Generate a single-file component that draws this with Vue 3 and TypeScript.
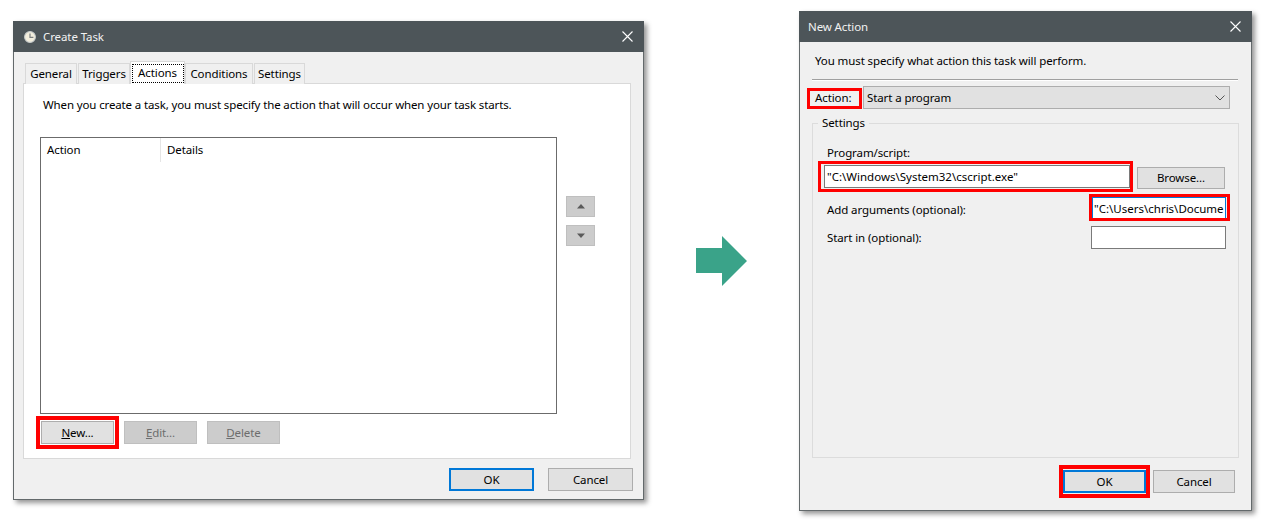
<script setup lang="ts">
const tabs: string[] = ['General', 'Triggers', 'Actions', 'Conditions', 'Settings']
</script>

<template>
  <div class="page">
    <section class="win win-left">
      <header class="title">
        <svg class="clock" width="12" height="12" viewBox="0 0 12 12">
          <circle cx="6" cy="6" r="5.4" fill="#f3eedd" stroke="#c8cccc" stroke-width="1.1" />
          <path d="M6 2.6V6.4H9.4" fill="none" stroke="#7b7f80" stroke-width="1.2" />
        </svg>
        <span class="title-text">Create Task</span>
        <svg class="close" width="11" height="11" viewBox="0 0 11 11">
          <path d="M.5.5l10 10M10.5.5l-10 10" stroke="#fff" stroke-width="1.1" fill="none" />
        </svg>
      </header>
      <div class="tabs">
        <div v-for="t in tabs" :key="t" class="tab" :class="{ active: t === 'Actions', ['t-' + t]: true }">
          <span class="tab-label">{{ t }}</span>
        </div>
      </div>
      <div class="panel">
        <p class="panel-intro">When you create a task, you must specify the action that will occur when your task starts.</p>
        <div class="list-row">
          <div class="list">
            <div class="list-head">
              <span class="col col-action">Action</span>
              <span class="col col-details">Details</span>
            </div>
          </div>
          <div class="updown">
            <button class="btn small"><svg width="8" height="5" viewBox="0 0 8 5"><path d="M4 0l4 4.5H0z" fill="#5a5a5a" /></svg></button>
            <button class="btn small"><svg width="8" height="5" viewBox="0 0 8 5"><path d="M4 5L0 .5h8z" fill="#5a5a5a" /></svg></button>
          </div>
        </div>
        <div class="action-btns">
          <div class="hl-wrap">
            <button class="btn act"><u>N</u>ew...</button>
            <span class="hl hl-new"></span>
          </div>
          <button class="btn act disabled"><u>E</u>dit...</button>
          <button class="btn act disabled del"><u>D</u>elete</button>
        </div>
      </div>
      <footer class="foot-left">
        <button class="btn foot-btn primary">OK</button>
        <button class="btn foot-btn">Cancel</button>
      </footer>
    </section>

    <svg class="arrow" width="51" height="50" viewBox="0 0 51 50">
      <path d="M0 12H26V0L51 25 26 50V37H0z" fill="#3aa389" />
    </svg>

    <section class="win win-right">
      <header class="title">
        <span class="title-text t2">New Action</span>
        <svg class="close" width="11" height="11" viewBox="0 0 11 11">
          <path d="M.5.5l10 10M10.5.5l-10 10" stroke="#fff" stroke-width="1.1" fill="none" />
        </svg>
      </header>
      <p class="intro">You must specify what action this task will perform.</p>
      <div class="rule"></div>
      <div class="combo-row">
        <div class="hl-wrap combo-label">
          <span>Action:</span>
          <span class="hl hl-action"></span>
        </div>
        <div class="combo">
          <span>Start a program</span>
          <svg width="10" height="6" viewBox="0 0 10 6"><path d="M.5.5L5 5 9.5.5" fill="none" stroke="#555" stroke-width="1" /></svg>
        </div>
      </div>
      <div class="group">
        <div class="legend">Settings</div>
        <div class="field-label">Program/script:</div>
        <div class="prog-row">
          <div class="hl-wrap">
            <div class="input prog">"C:\Windows\System32\cscript.exe"</div>
            <span class="hl hl-prog"></span>
          </div>
          <button class="btn browse">Browse...</button>
        </div>
        <div class="arg-row">
          <span class="arg-label">Add arguments (optional):</span>
          <div class="hl-wrap">
            <div class="input args">"C:\Users\chris\Docume</div>
            <span class="hl hl-args"></span>
          </div>
        </div>
        <div class="arg-row start">
          <span class="arg-label start-label">Start in (optional):</span>
          <div class="input startin"></div>
        </div>
      </div>
      <footer class="foot-right">
        <div class="hl-wrap">
          <button class="btn primary ok2">OK</button>
          <span class="hl hl-ok"></span>
        </div>
        <button class="btn cancel2">Cancel</button>
      </footer>
    </section>
  </div>
</template>

<style>
html, body { margin: 0; background: #fff; }
</style>

<style scoped>
* { box-sizing: border-box; }
.page {
  width: 1266px; height: 523px; padding-left: 13px; display: flex; align-items: flex-start;
  background: #fff; overflow: hidden; color: #000;
  font: 11.5px/16px "Noto Sans", "Open Sans", sans-serif; letter-spacing: -.1px;
}
.win {
  background: #f0f0f0; border: 1px solid #63696b; border-top: 0;
  box-shadow: 3px 3px 5px rgba(0, 0, 0, .42); flex: none;
}
.win-left { width: 631px; height: 479px; margin-top: 21px; }
.win-right { width: 453px; height: 500px; margin-top: 11px; margin-left: 52px; }
.arrow { flex: none; margin: 236px 0 0 52px; }
.title {
  height: 31px; background: #4d5559; color: #f2f2f2; display: flex; align-items: center;
  margin: 0 -1px; padding: 0 11px 0 11px;
}
.clock { margin-right: 7px; margin-top: 1px; }
.title-text { flex: 1; padding-top: 1px; }
.t2 { margin-left: -2px; }
.close { margin-top: -1px; }
.tabs { height: 22px; margin: 10px 0 -1px 10px; display: flex; align-items: flex-end; position: relative; z-index: 1; }
.tab {
  height: 21px; background: #f0f0f0; border: 1px solid #d9d9d9; border-bottom: 0; margin-right: 1px;
  display: flex; align-items: center; justify-content: center;
}
.t-General { width: 52px; margin-left: 1px; }
.t-Triggers { width: 52px; }
.t-Actions { width: 55px; }
.t-Conditions { width: 68px; }
.t-Settings { width: 51px; }
.tab.active { height: 23px; background: #fff; margin-left: -1px; margin-right: 0; align-items: flex-start; padding-top: 3px; }
.tab.active .tab-label { outline: 1px dotted #000; width: 50px; height: 17px; text-align: center; line-height: 15px; }
.panel {
  width: 608px; height: 376px; margin-left: 9px; background: #fff; border: 1px solid #d9d9d9;
}
.panel-intro { margin: 13px 0 0 19px; white-space: nowrap; letter-spacing: -.13px; }
.list-row { display: flex; margin: 24px 0 0 16px; }
.list { width: 517px; height: 277px; border: 1px solid #6b6b6b; background: #fff; }
.list-head { display: flex; height: 24px; }
.col { line-height: 23px; padding-left: 6px; }
.col-action { width: 120px; border-right: 1px solid #e5e5e5; }
.updown { margin: 59px 0 0 9px; display: flex; flex-direction: column; gap: 8px; }
.btn {
  font: inherit; letter-spacing: inherit; color: #000; background: #e1e1e1; border: 1px solid #adadad; padding: 0; margin: 0;
  display: flex; align-items: center; justify-content: center; flex: none; white-space: pre;
}
.small { width: 29px; height: 21px; background: #ccc; border-color: #bfbfbf; }
.action-btns { display: flex; gap: 10px; margin: 7px 0 0 17px; }
.act { width: 73px; height: 23px; }
.disabled { background: #ccc; border-color: #bfbfbf; color: #6d6d6d; }
.foot-left { display: flex; gap: 14px; margin: 9px 0 0 435px; }
.foot-btn { width: 85px; height: 23px; }
.primary { border: 2px solid #0078d7; }
.hl-wrap { position: relative; flex: none; }
.hl { position: absolute; border: 3px solid #f00; pointer-events: none; }
.hl-new { inset: -5px; border-width: 4px; }
.intro { margin: 11px 0 0 15px; height: 16px; line-height: 15px; }
.rule { width: 426px; height: 2px; margin: 10px 0 0 12px; background: #a0a0a0; border-bottom: 1px solid #fff; }
.combo-row { display: flex; align-items: center; margin-top: 5px; padding-left: 15px; }
.combo-label { width: 48px; height: 18px; align-self: flex-start; margin-top: 2px; padding-top: 2px; }
.hl-action { inset: 0 1px -3px -8px; }
.combo {
  width: 367px; height: 23px; background: #e1e1e1; border: 1px solid #adadad;
  display: flex; align-items: center; justify-content: space-between; padding: 0 4px 0 3px;
}
.group { width: 427px; height: 335px; margin: 14px 0 0 12px; border: 1px solid #dcdcdc; padding-left: 14px; }
.legend { width: max-content; margin: -9px 0 0 -9px; padding: 0 4px; height: 16px; line-height: 15px; background: #f0f0f0; }
.field-label { margin-top: 14px; height: 16px; line-height: 15px; }
.prog-row { display: flex; align-items: flex-start; margin-top: 4px; margin-left: -3px; }
.input { background: #fff; border: 1px solid #7a7a7a; white-space: nowrap; overflow: hidden; padding: 2px; letter-spacing: 0; }
.prog { width: 306px; height: 23px; line-height: 18px; }
.hl-prog { inset: -4px -3px -4px -6px; border-width: 3px; }
.browse { width: 88px; height: 22px; margin: 2px 0 0 7px; }
.arg-row { display: flex; align-items: center; margin-top: 8px; }
.arg-label { width: 265px; padding-top: 4px; }
.args { width: 134px; height: 22px; border-color: #0078d7; line-height: 17px; padding: 2px 0 2px 1px; overflow: visible; }
.hl-args { inset: -3px -4px -2px -3px; border-width: 3px; }
.start { margin-top: 7px; }
.start-label { width: 264px; padding-top: 0; }
.startin { width: 135px; height: 23px; }
.foot-right { display: flex; gap: 7px; margin: 12px 0 0 263px; }
.ok2 { width: 83px; height: 23px; }
.cancel2 { width: 82px; height: 23px; }
.hl-ok { inset: -5px -4px -5px -4px; border-width: 4px; }
</style>
